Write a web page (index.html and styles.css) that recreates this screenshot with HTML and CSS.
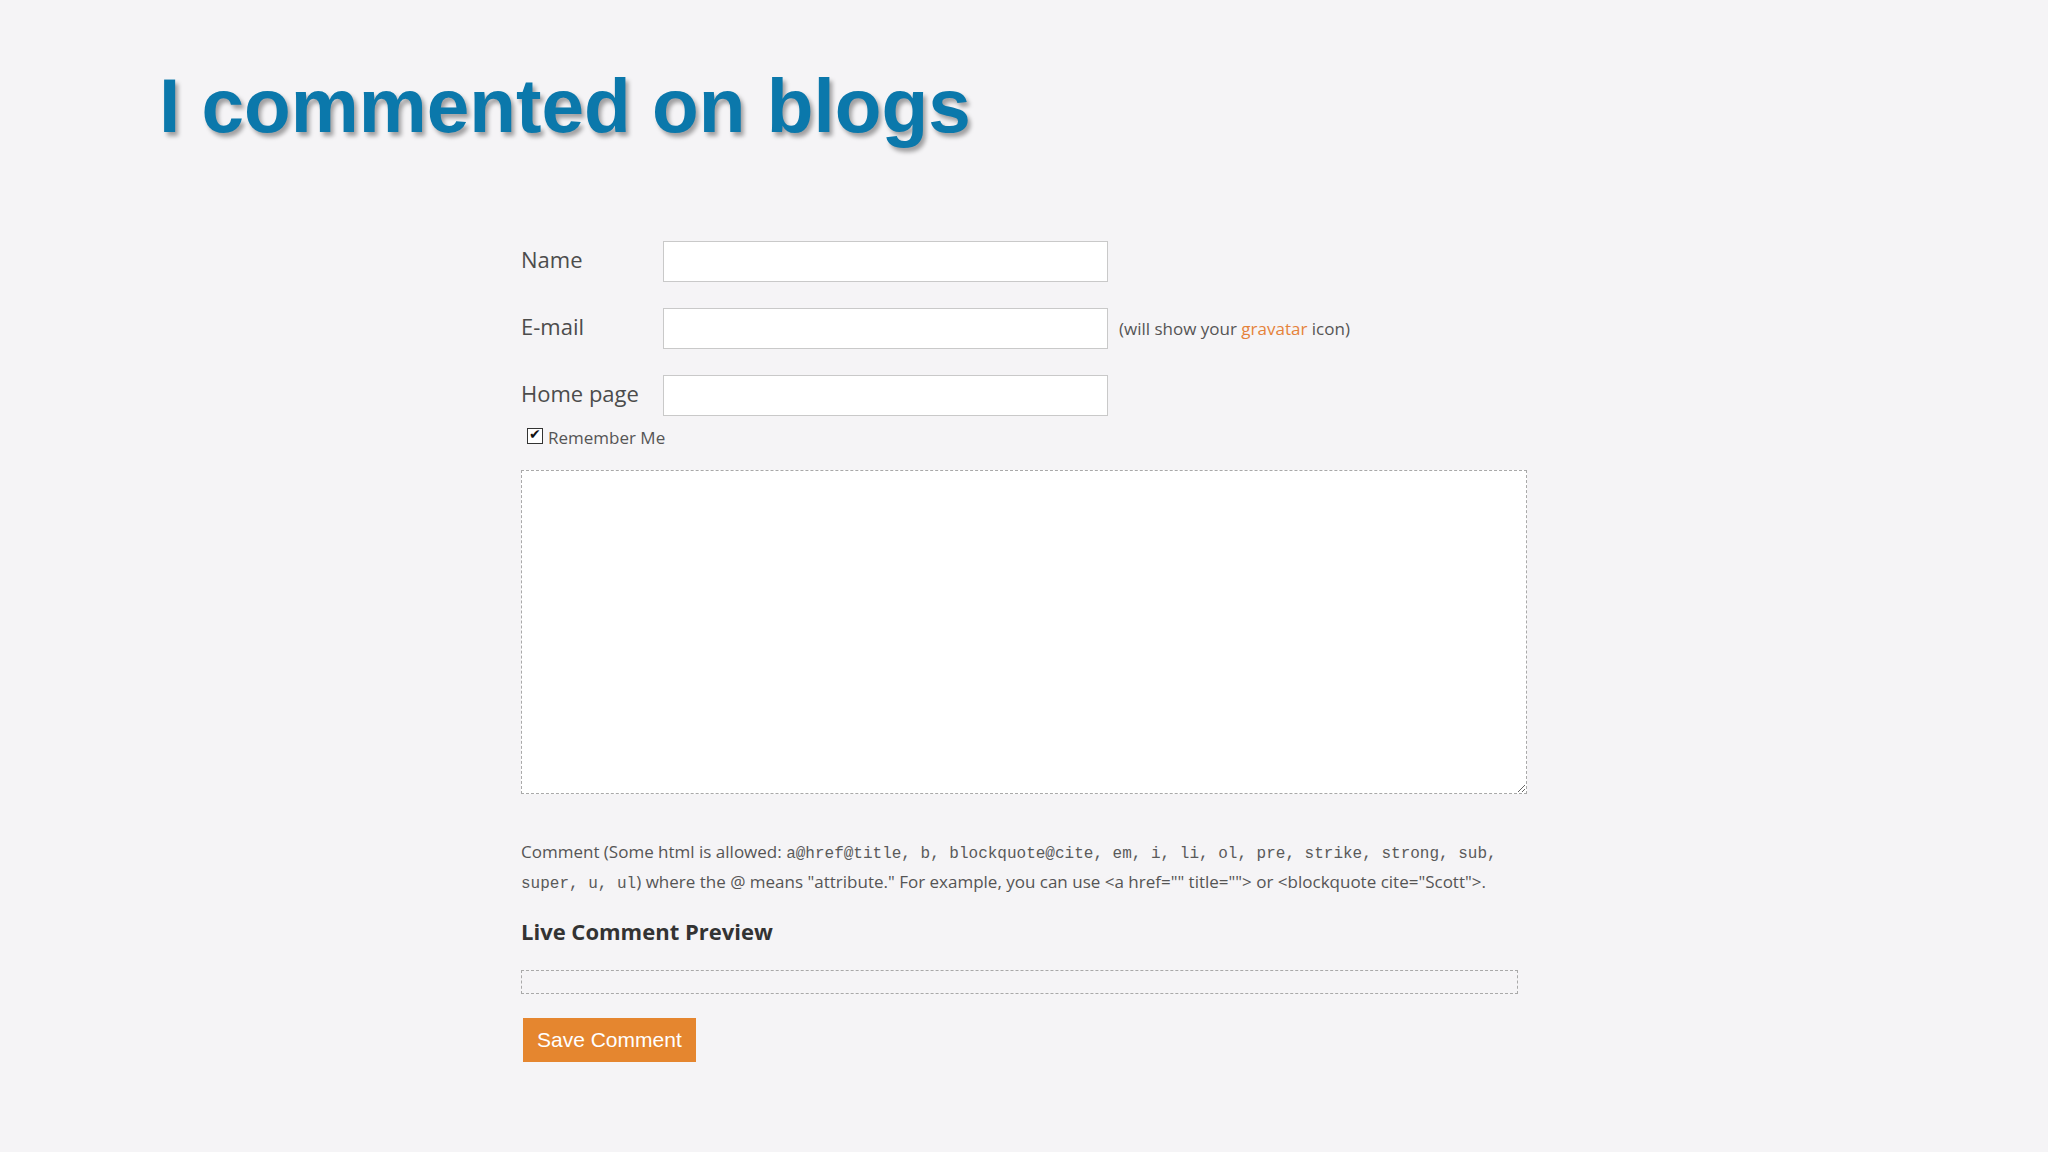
FILE: index.html
```html
<!DOCTYPE html>
<html lang="en">
<head>
  <meta charset="UTF-8">
  <meta name="viewport" content="width=device-width, initial-scale=1.0">
  <title>I commented on blogs</title>
  <link rel="stylesheet" href="styles.css">
</head>
<body>
<div class="slide">
  <h1 class="slide-title">I commented on blogs</h1>

  <form class="comment-form">
    <div class="field">
      <label class="field-label" for="name">Name</label>
      <input class="field-input" id="name" type="text">
    </div>
    <div class="field">
      <label class="field-label" for="email">E-mail</label>
      <input class="field-input" id="email" type="text">
      <span class="field-note">(will show your <a href="#">gravatar</a> icon)</span>
    </div>
    <div class="field">
      <label class="field-label" for="homepage">Home page</label>
      <input class="field-input" id="homepage" type="text">
    </div>
    <div class="remember">
      <input class="remember-box" id="remember" type="checkbox" checked>
      <label for="remember">Remember Me</label>
    </div>

    <textarea class="comment-body"></textarea>

    <p class="comment-help">Comment (Some html is allowed: <code>a@href@title, b, blockquote@cite, em, i, li, ol, pre, strike, strong, sub, super, u, ul</code>) where the @ means "attribute." For example, you can use &lt;a href="" title=""&gt; or &lt;blockquote cite="Scott"&gt;.</p>

    <h3 class="preview-title">Live Comment Preview</h3>
    <div class="preview-box"></div>

    <button class="save-button" type="button">Save Comment</button>
  </form>
</div>
</body>
</html>
```

FILE: styles.css
```css
body {
  margin: 0;
  background-color: #f5f4f6;
  font-family: "Open Sans", Arial, sans-serif;
  color: #505050;
}
.slide {
  padding: 68px 0 0 159px;
}
.slide-title {
  margin: 0;
  font-family: "Liberation Sans", Arial, sans-serif;
  font-weight: 700;
  font-size: 76.5px;
  line-height: 76px;
  color: #0b78ab;
  text-shadow: 3px 4px 4px rgba(0, 0, 0, 0.35);
}
.comment-form {
  margin: 97px 0 0 362px;
  width: 1006px;
}
.field {
  display: flex;
  align-items: center;
  margin-bottom: 26px;
}
.field-label {
  width: 142px;
  padding-bottom: 5px;
  font-size: 22px;
  color: #4c4c4c;
}
.field-input {
  width: 445px;
  height: 41px;
  box-sizing: border-box;
  margin: 0;
  border: 1px solid #c9c9c9;
  background: #ffffff;
}
.field-note {
  margin-left: 11px;
  font-size: 17px;
  color: #555555;
}
.field-note a {
  color: #e5823a;
  text-decoration: none;
}
.field:nth-child(3) {
  margin-bottom: 9px;
}
.remember {
  display: flex;
  align-items: center;
  height: 24px;
  margin-left: 6px;
  font-size: 17px;
  color: #555555;
}
.remember-box {
  appearance: none;
  position: relative;
  width: 16px;
  height: 16px;
  margin: 0 5px 3px 0;
  border: 1px solid #333333;
  background: #ffffff;
}
.remember-box:checked::after {
  content: "\2714";
  position: absolute;
  left: 1px;
  top: -3px;
  font-family: "DejaVu Sans", sans-serif;
  font-size: 14px;
  color: #111111;
}
.comment-body {
  display: block;
  width: 1006px;
  height: 324px;
  box-sizing: border-box;
  margin: 21px 0 0;
  border: 1px dashed #a9a9a9;
  background: #ffffff;
  resize: both;
}
.comment-help {
  margin: 43px 0 0;
  font-size: 17px;
  line-height: 30px;
  color: #555555;
}
.comment-help code {
  font-family: "Liberation Mono", "Courier New", monospace;
  font-size: 16px;
  line-height: 20px;
  color: #5a5a5a;
}
.preview-title {
  margin: 19px 0 0;
  font-size: 22px;
  line-height: 30px;
  font-weight: 700;
  color: #333333;
}
.preview-box {
  width: 997px;
  height: 24px;
  box-sizing: border-box;
  margin-top: 24px;
  border: 1px dashed #a9a9a9;
}
.save-button {
  display: block;
  height: 44px;
  margin: 24px 0 0 2px;
  padding: 0 14px;
  border: none;
  background-color: #e5862f;
  color: #ffffff;
  font-family: "Liberation Sans", Arial, sans-serif;
  font-size: 21px;
  cursor: pointer;
}
```
